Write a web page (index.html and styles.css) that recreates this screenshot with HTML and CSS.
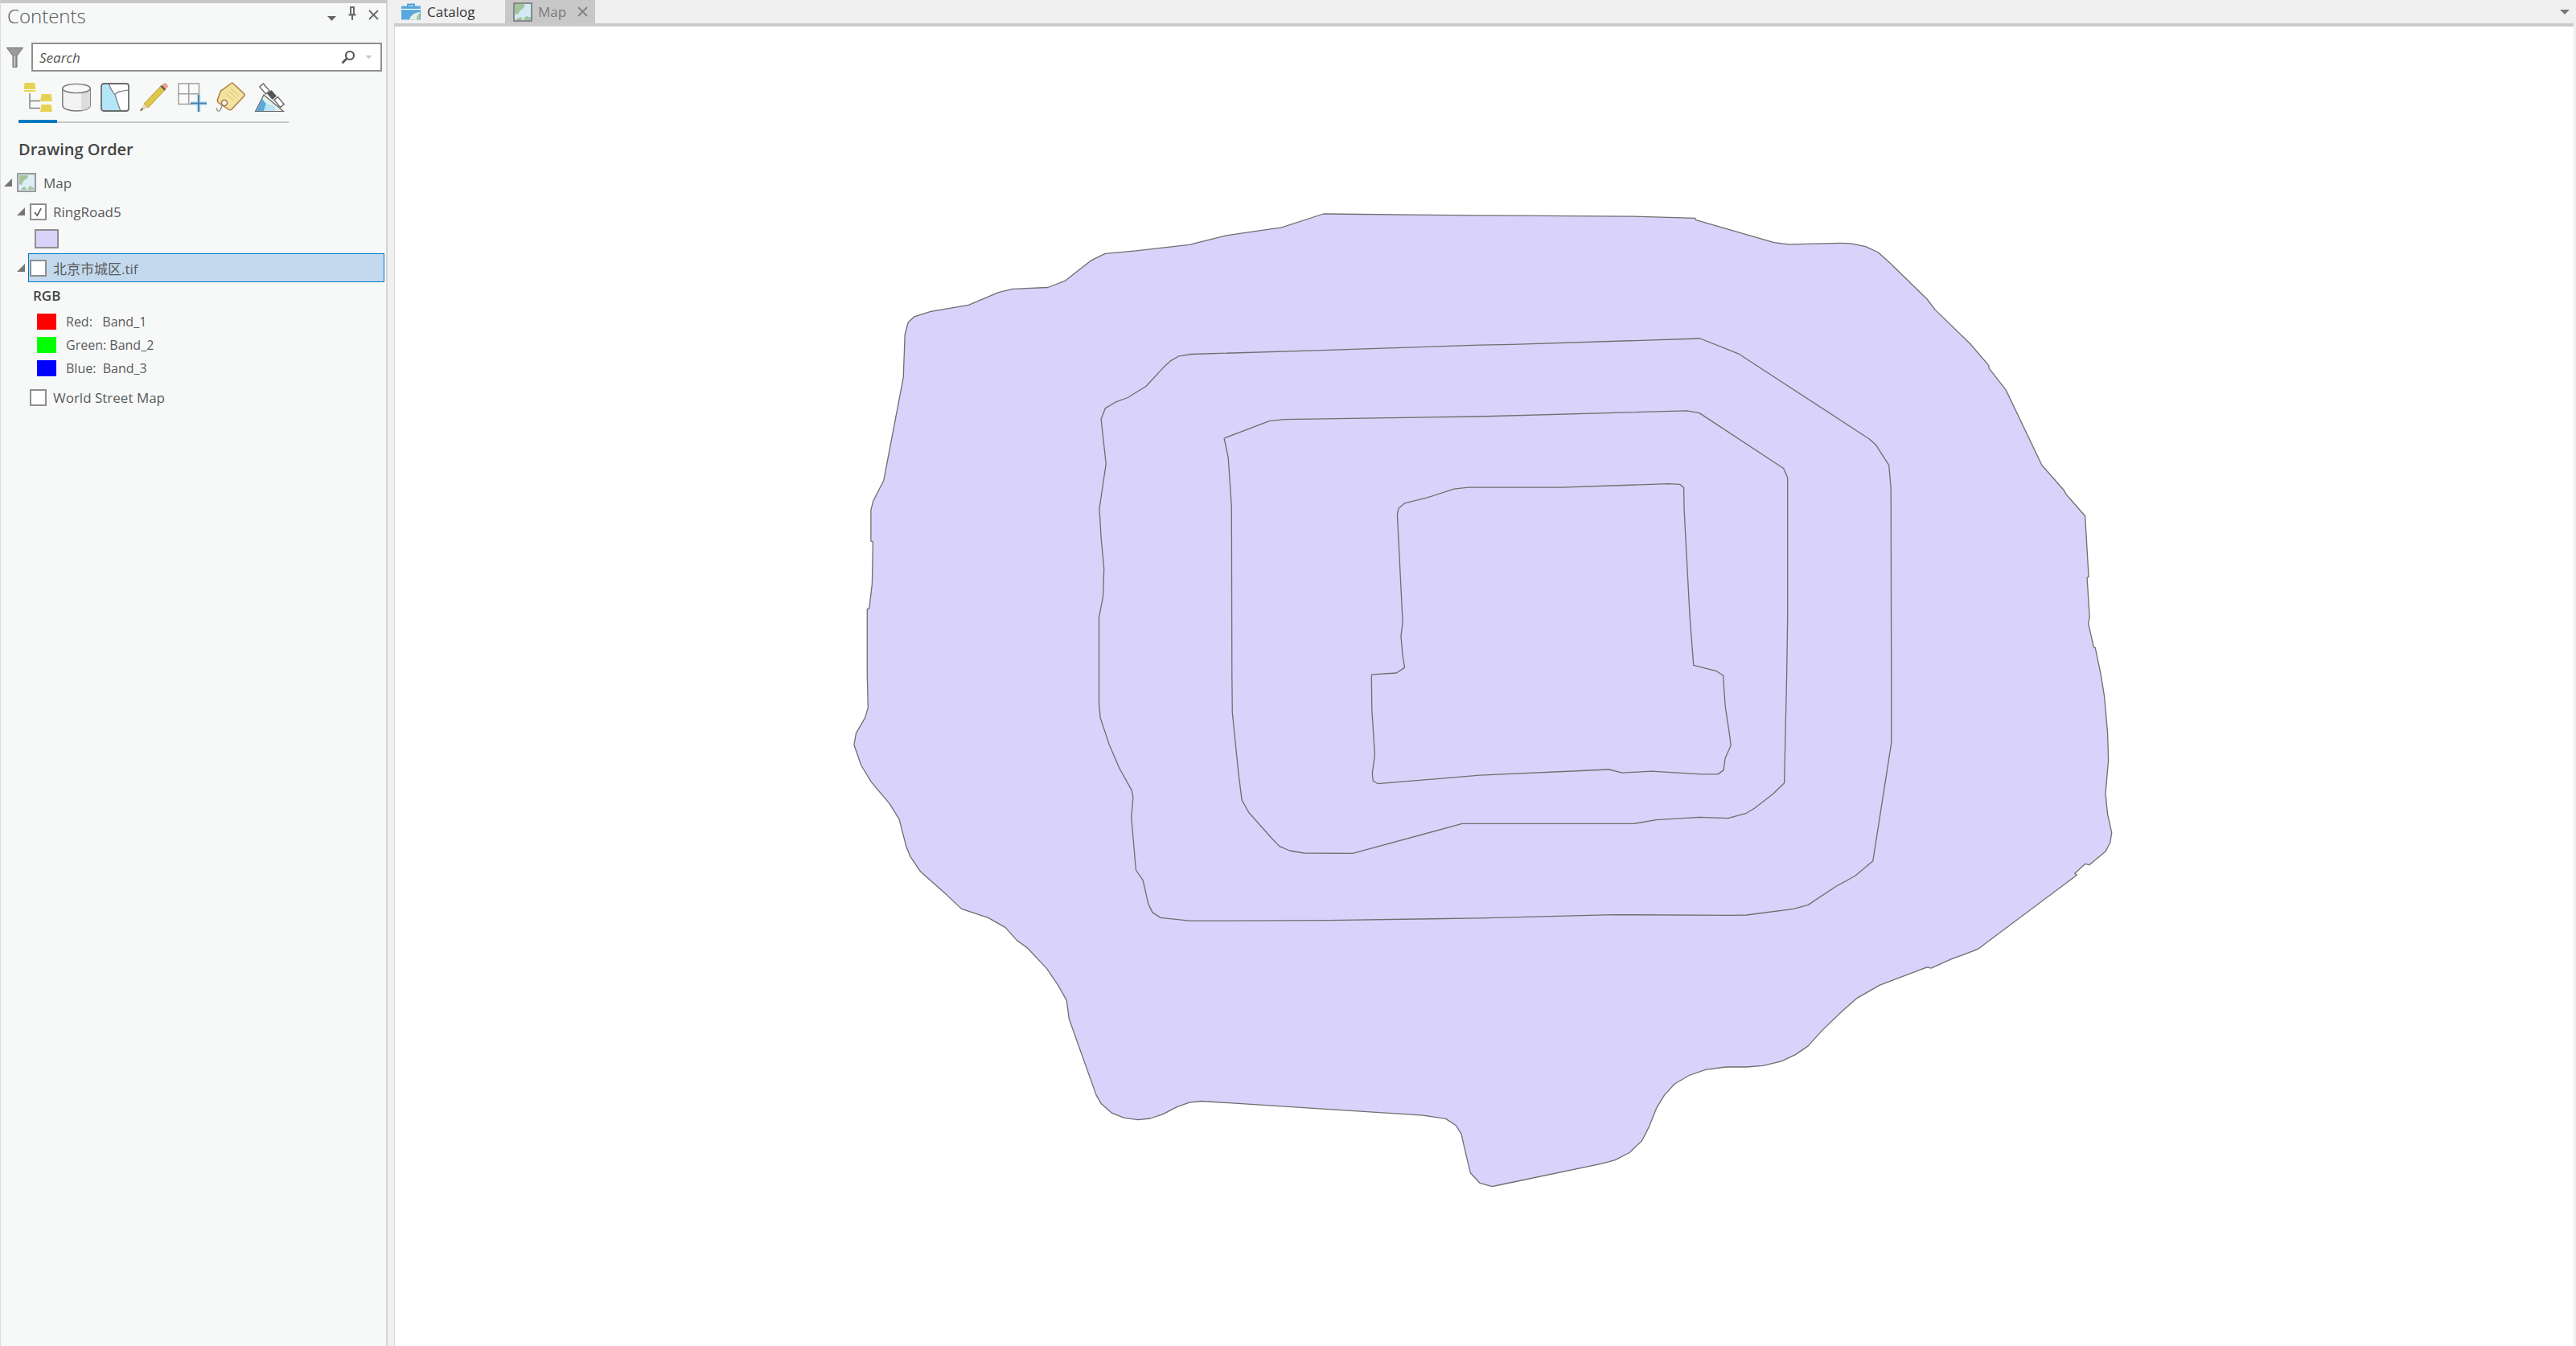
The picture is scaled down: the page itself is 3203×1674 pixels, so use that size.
FILE: index.html
```html
<!DOCTYPE html>
<html lang="en">
<head>
<meta charset="utf-8">
<title>Map</title>
<link rel="stylesheet" href="styles.css">
</head>
<body>
<aside class="panel">
  <header class="panel-head">
    <h1 class="panel-title">Contents</h1>
    <div class="panel-tools">
      <span class="menu-arrow"></span>
      <svg class="tool-pin" viewBox="0 0 12 18"><path d="M3 1H9M4 1V10H8V1M1.500 10.500H10.500M6 11V17" fill="none" stroke="#6a6a6a" stroke-width="2"/></svg>
      <svg class="tool-close" viewBox="0 0 13 13"><path d="M1 1L12 12M12 1L1 12" fill="none" stroke="#6a6a6a" stroke-width="1.800"/></svg>
    </div>
  </header>
  <div class="search-row">
    <svg class="filter" viewBox="0 0 21 25"><path d="M0.500 0.500H20.500L13 10.500V24.500H8V10.500Z" fill="#9a9a9a" stroke="#6f6f6f"/><path d="M10 11V24" stroke="#c4c4c4" stroke-width="2"/></svg>
    <div class="search">
      <span class="search-text">Search</span>
      <svg class="search-glass" viewBox="0 0 18 18"><circle cx="11" cy="7" r="5" fill="#fff" stroke="#555" stroke-width="2.200"/><path d="M7.500 10.500L1.500 16.500" stroke="#555" stroke-width="2.600"/></svg>
      <span class="search-arrow"></span>
    </div>
  </div>
  <nav class="view-tabs">
    <div class="view-tab active">
      <svg viewBox="0 0 36 36"><path d="M1.500 0H14.500L15.500 11H0.500Z" fill="#e6d252"/><path d="M0 8.500H16" stroke="#f7f9f9" stroke-width="1.200"/><path d="M8 13V31.500H21M8 22.500H21" fill="none" stroke="#808080" stroke-width="1.400"/><path d="M22.500 14H34.500L36 23H21Z" fill="#e6d252"/><path d="M22.500 27H34.500L36 36H21Z" fill="#e6d252"/></svg>
    </div>
    <div class="view-tab">
      <svg viewBox="0 0 36 36"><path d="M0.800 7V28C0.800 32 8 35 18 35S35.200 32 35.200 28V7Z" fill="#f3f3f3" stroke="#777" stroke-width="1.400"/><path d="M24 11.500C30 10.500 34.500 9 35 7V28C35 31 31 33.500 24 34.500Z" fill="#dcdcdc"/><ellipse cx="18" cy="7" rx="17.200" ry="5.600" fill="#f8f8f8" stroke="#777" stroke-width="1.400"/></svg>
    </div>
    <div class="view-tab">
      <svg viewBox="0 0 36 36"><rect x="1" y="1" width="34" height="34" rx="3" fill="#fff"/><path d="M1 4C1 2 2 1 4 1H11C11 7 15 10 18 15C20 20 22 28 25 35H4C2 35 1 34 1 32Z" fill="#b3e6f6"/><path d="M11 1C11 7 15 10 18 15C20 20 22 28 25 35M18 15C20 11 26 10 35 9" fill="none" stroke="#777" stroke-width="1.200"/><rect x="1" y="1" width="34" height="34" rx="3" fill="none" stroke="#6b6b6b" stroke-width="1.800"/></svg>
    </div>
    <div class="view-tab">
      <svg viewBox="0 0 36 36"><path d="M6 26L28 3L33 8L11 31Z" fill="#e0c846" stroke="#a08a30" stroke-width="0.800"/><path d="M28 3L31 0.500C32 0 33 0 34 1L35.500 3C36 4 36 5 35 6L33 8Z" fill="#eaa08c"/><path d="M26.500 4.500L31.500 9.500L33 8L28 3Z" fill="#555"/><path d="M6 26L11 31L1 35.500Z" fill="#e8d8b0"/><path d="M3 31L5 33L1 35.500Z" fill="#555"/></svg>
    </div>
    <div class="view-tab">
      <svg viewBox="0 0 36 36"><path d="M1 1H26.500V26.500H1ZM13.700 1V26.500M1 13.700H26.500" fill="#fafafa" stroke="#a0a0a0" stroke-width="1.500"/><path d="M26 15V36M16 25.500H36" stroke="#bfe4f7" stroke-width="5"/><path d="M26 15V36M16 25.500H36" stroke="#4a7fa8" stroke-width="2"/></svg>
    </div>
    <div class="view-tab">
      <svg viewBox="0 0 36 36"><path d="M18 1C19 0 20 0 21 1L34.500 13.500C35.500 14.500 35.500 15.500 34.500 16.500L19 33C18 34 16 34 15 33L3 25C1.500 24 1 23 1.500 21L5 11C5.500 10 6 9.500 7 9Z" fill="#f3e3a0" stroke="#b07c3e" stroke-width="1.500"/><path d="M15 10L25 19M12 13L21 22M18 7L28 16" stroke="#e3cd86" stroke-width="1.200"/><circle cx="10" cy="25" r="3.500" fill="#fff" stroke="#a0703a" stroke-width="1.500"/><path d="M8 27C6 30 6 34 3.500 35S0 33 1 31" fill="none" stroke="#777" stroke-width="1.100"/></svg>
    </div>
    <div class="view-tab">
      <svg viewBox="0 0 36 36"><path d="M0.500 35.500L11 15L35.500 35.500Z" fill="#e3f0e8" stroke="#666" stroke-width="1.200"/><path d="M1.500 35L9 20L14 26L11 35Z" fill="#5ea9dc"/><path d="M11 35L14 26L24 29L26 35Z" fill="#b9e2f5"/><rect x="6" y="4.500" width="12" height="6" fill="#fff" stroke="#666" stroke-width="1.400" transform="rotate(50 12 7.500)"/><rect x="24" y="21" width="12" height="6" fill="#fff" stroke="#666" stroke-width="1.400" transform="rotate(50 30 24)"/><rect x="16" y="11.500" width="10" height="7" fill="#555" transform="rotate(50 21 15)"/></svg>
    </div>
  </nav>
  <h2 class="order-title">Drawing Order</h2>
  <div class="tree">
    <div class="row row-map">
      <span class="twist"></span>
      <svg class="map-icon" viewBox="0 0 24 24"><rect x="1" y="1" width="22" height="22" fill="#dcedf5" stroke="#7d7d7d" stroke-width="1.500"/><path d="M3 3H14C14 6 12 8 9 9C8 11 6 12 6 15C5 15 4 14 3 15ZM14 21C14 19 15 17 17 16C18 18 20 19 21 18V21ZM5 21C6 18 9 17 11 18L12 21Z" fill="#a2c49c"/></svg>
      <span class="label">Map</span>
    </div>
    <div class="row row-layer">
      <span class="twist"></span>
      <span class="check"><svg viewBox="0 0 21 21"><path d="M5 11L9 16L15 5" fill="none" stroke="#5a5a5a" stroke-width="2"/></svg></span>
      <span class="label">RingRoad5</span>
    </div>
    <div class="row-patch"><span class="patch"></span></div>
    <div class="row row-selected">
      <span class="twist"></span>
      <div class="selection">
        <span class="check"></span>
        <span class="label">北京市城区.tif</span>
      </div>
    </div>
    <div class="row-rgb">RGB</div>
    <div class="row-band"><span class="swatch swatch-red"></span><span class="band">Red:   Band_1</span></div>
    <div class="row-band"><span class="swatch swatch-green"></span><span class="band">Green: Band_2</span></div>
    <div class="row-band"><span class="swatch swatch-blue"></span><span class="band">Blue:  Band_3</span></div>
    <div class="row row-world">
      <span class="check"></span>
      <span class="label">World Street Map</span>
    </div>
  </div>
</aside>
<main class="main">
  <div class="tabbar">
    <div class="tab tab-catalog">
      <svg class="tab-icon" viewBox="0 0 24 21"><path d="M8 4V1.500H16V4" fill="none" stroke="#4a9bd8" stroke-width="1.800"/><rect x="0" y="3.500" width="24" height="17" fill="#58a7de"/><path d="M0 7.500H24" stroke="#fff" stroke-width="1.200"/><path d="M10 20.500C11 16 15 12 23 11V20.500Z" fill="#e4f0e4"/><path d="M19 20.500C19 17 20 14 23 13V20.500Z" fill="#a2c49c"/></svg>
      <span class="tab-text">Catalog</span>
    </div>
    <div class="tab tab-map">
      <svg class="tab-icon-map" viewBox="0 0 24 24"><rect x="1" y="1" width="22" height="22" fill="#d3e9f6" stroke="#6f6f6f" stroke-width="1.500"/><path d="M2 2H14C15 6 12 8 10 9C9 11 7 12 6 15C4 15 3 14 2 15ZM13 22C13 20 14 18 17 17C19 18 20 19 22 18V22ZM3 22C5 19 8 18 11 19L11 22Z" fill="#a2c49c"/></svg>
      <span class="tab-text-map">Map</span>
      <svg class="tab-close" viewBox="0 0 13 13"><path d="M1 1L12 12M12 1L1 12" fill="none" stroke="#808080" stroke-width="1.800"/></svg>
    </div>
    <span class="tabbar-arrow"></span>
  </div>
  <div class="canvas">
    <svg class="map-svg" viewBox="491 33 2709 1641">
      <polygon class="area" points="1645.600,266 1840,267.900 2031.300,269.100 2107.900,271.400 2108.900,273.700 2205.800,301.600 2223.700,303.900 2289,302.400 2301.700,302.800 2319.600,306.600 2334.900,313.500 2350.200,327.300 2396.100,372 2406.300,385.400 2449.700,427.500 2472.700,454.300 2473.200,458.100 2494.100,484.900 2539,578.700 2567,610.500 2568.600,614.300 2592.600,641.800 2597.100,717.600 2595.100,718.400 2598.200,768.100 2596.600,775 2603.300,804.900 2605.300,805.600 2612.400,840 2616.500,865.300 2620.600,911.600 2621.600,945.200 2618,987.300 2620.600,1012.600 2625.700,1035.700 2623.700,1048.300 2618,1058.900 2597.700,1075.700 2592.600,1074.400 2579.800,1086.200 2582.300,1088.300 2578.800,1090.900 2459.900,1180.100 2442,1187.200 2426.700,1192.700 2401.200,1204.100 2396.100,1202.800 2337.400,1225.100 2309.400,1241.100 2291.500,1256.700 2266,1281.100 2248.200,1300.900 2232.900,1311.400 2215,1319.800 2192,1325.300 2171.600,1327 2146.100,1327 2120.600,1330.400 2100.200,1337.500 2082.300,1348 2069.600,1361.900 2059.400,1378.700 2050.200,1401.900 2041.500,1418.700 2026.200,1433.500 2008.400,1442.700 1993,1446.900 1865.500,1473.500 1855.300,1475.600 1840,1471.300 1828.300,1458.700 1823.200,1437.700 1817,1410.300 1810.400,1399.800 1797.700,1391.400 1769.600,1387.200 1494.100,1369.500 1478.800,1371.200 1463.500,1376.700 1445.600,1385.900 1430.300,1391 1415,1392.600 1397.100,1390.100 1381.800,1383.800 1369.100,1372.400 1363,1361.900 1329.300,1267.200 1326.200,1244.100 1315.500,1225.100 1301.200,1204.100 1277.200,1178.800 1264.500,1169.600 1250.200,1153.600 1228.800,1141.400 1195.600,1130.400 1177.800,1113.600 1144.600,1084.100 1131.800,1065.200 1126.700,1052.600 1118.100,1018.900 1106.300,999.900 1083.400,972.600 1070.600,951.500 1061.900,926.300 1064.500,911.600 1075.700,892.600 1079.300,880 1078.300,840 1078.300,757.400 1080.800,756.600 1084.400,726 1085.400,673.600 1082.900,673.200 1082.900,634.200 1085.900,622.700 1098.700,597.800 1123.200,469.600 1125.200,416 1129.300,400.700 1136.900,393.800 1157.300,387.300 1204.300,379.300 1241.500,363.600 1259.400,359.400 1302.800,357.500 1324.700,349.100 1356.300,324.200 1374.200,315.400 1412.400,311.900 1478.800,304.300 1524.700,292.800 1593.600,282.900"/>
      <polygon class="ring" points="1481.300,440.500 1636.900,435.900 1840,429.100 1880.800,428.300 2114,421 2161.400,439.800 2324.700,546.200 2332.900,553.800 2348.700,578.700 2351.200,607.400 2351.700,840 2351.700,924.200 2328.800,1070.700 2306.800,1089.200 2283.900,1101.800 2248.200,1125.400 2230.300,1130.400 2171.600,1138 2151.200,1138.400 2005.800,1137.600 1840,1141.800 1652.200,1144.700 1478.800,1145.200 1443,1141.400 1432.900,1134.600 1427.800,1124.100 1421.100,1094.600 1412.400,1082 1406.800,1016.800 1408.900,991.500 1407.300,983.100 1392,955.700 1379.300,926.300 1368.100,892.600 1366.500,873.700 1366.500,840 1366.500,768.100 1371.600,741.300 1372.700,706.900 1369.100,668.600 1367,632.300 1375.200,576.800 1369.100,521.300 1374.200,507.900 1386.900,500.200 1402.200,494.500 1425.200,480.300 1445.600,458.100 1455.800,448.600 1466,442.800"/>
      <polygon class="ring" points="1522.100,545 1578.300,523.600 1596.100,521.700 1840,518 2097.700,510.900 2113,513.600 2217.600,582.500 2222.700,594 2222.700,768.100 2221.600,840 2218.600,973.800 2204.800,987.300 2181.800,1005 2171.600,1011.300 2148.700,1017.600 2113,1016.400 2059.400,1019.700 2031.300,1024.400 1840,1024.400 1818,1024.400 1681.800,1061.400 1621.600,1061 1603.800,1058 1591,1052.600 1580.800,1042 1552.800,1010.500 1544.100,994.900 1540,962.100 1532.300,886.300 1531.800,840 1531.300,630.400 1527.200,569.100"/>
      <polygon class="ring" points="1737.400,639.900 1739,632.300 1746.600,625.800 1774.700,618.900 1807.800,608.200 1825.700,606.200 1840,606.200 1942,606.200 2074.700,601.600 2089,602.400 2093.600,606.600 2094.100,634.200 2101.200,768.100 2105.800,827.400 2133.400,834.300 2142.600,840 2145.100,877.900 2150.200,911.600 2152.200,927.100 2145.100,943.100 2143.100,957.900 2135.900,962.900 2115.500,962.900 2053.300,959.100 2017,961.200 2000.700,957 1840,964.200 1713.500,974.700 1707.300,971.300 1706.300,962.100 1709.400,938.900 1705.800,882.100 1705.300,840 1705.800,838.900 1736.400,837 1746.600,830.100 1744.100,816 1742,791.100 1744.100,773.900"/>
    </svg>
  </div>
</main>
</body>
</html>
```
FILE: styles.css
```css
* { box-sizing: border-box; }
html, body { margin: 0; height: 100%; }
body {
  display: flex;
  width: 3203px;
  height: 1674px;
  overflow: hidden;
  background: #f0f0f0;
  font-family: "Open Sans", "Noto Sans CJK SC", sans-serif;
  color: #4a4a4a;
}

/* Contents pane */
.panel {
  flex: 0 0 482px;
  height: 100%;
  background: #f7f9f9;
  border-top: 4px solid #c8c8c8;
  border-right: 2px solid #d4d6d6;
  border-left: 1px solid #dcdcdc;
}
.panel-head {
  display: flex;
  justify-content: space-between;
  align-items: center;
  height: 32px;
  padding: 0 9px 0 8px;
}
.panel-title {
  margin: 0;
  font-size: 24px;
  font-weight: 300;
  color: #555;
  line-height: 32px;
}
.panel-tools { display: flex; align-items: center; gap: 14px; }
.menu-arrow {
  width: 11px;
  height: 6px;
  margin-top: 6px;
  background: #666;
  clip-path: polygon(0 0, 100% 0, 50% 100%);
}
.tool-pin { width: 12px; height: 18px; margin-top: -6px; }
.tool-close { width: 13px; height: 13px; margin-top: -4px; }

.search-row {
  display: flex;
  align-items: center;
  height: 36px;
  margin-top: 17px;
  padding-left: 7px;
}
.filter { width: 21px; height: 25px; margin-right: 10px; }
.search {
  display: flex;
  align-items: center;
  width: 436px;
  height: 36px;
  padding: 0 10px 0 8px;
  background: #fff;
  border: 2px solid #8f8f8f;
}
.search-text { flex: 1; font-size: 17px; font-style: italic; color: #555; }
.search-glass { width: 18px; height: 18px; margin-right: 12px; }
.search-arrow {
  width: 9px;
  height: 5px;
  background: #c8c8c8;
  clip-path: polygon(0 0, 100% 0, 50% 100%);
}

.view-tabs {
  display: flex;
  width: 336px;
  height: 50px;
  margin: 14px 0 0 22px;
  border-bottom: 2px solid #c8c8c8;
}
.view-tab { flex: 0 0 48px; height: 50px; padding: 0 6px; }
.view-tab svg { display: block; width: 36px; height: 36px; overflow: visible; }
.view-tab.active { border-bottom: 4px solid #007ac2; }

.order-title {
  margin: 18px 0 0 22px;
  font-size: 20px;
  font-weight: 600;
  line-height: 30px;
  color: #444;
}

/* Layer tree */
.tree { margin-top: 8px; }
.row { display: flex; align-items: center; height: 36px; }
.label { font-size: 17px; color: #5a5a5a; white-space: pre; }
.twist {
  flex: none;
  width: 10px;
  height: 10px;
  background: #777;
  clip-path: polygon(100% 0, 100% 100%, 0 100%);
}
.row-map { padding-left: 4px; }
.map-icon { width: 24px; height: 24px; margin: 0 9px 0 6px; }
.row-layer, .row-selected { padding-left: 20px; }
.row-layer .label, .selection .label { margin-left: 8px; }
.check {
  flex: none;
  width: 21px;
  height: 21px;
  background: #fff;
  border: 2px solid #8f8f8f;
}
.check svg { display: block; width: 17px; height: 17px; }
.row-layer .check { margin-left: 6px; }
.row-patch { height: 34px; padding: 4px 0 0 42px; }
.patch {
  display: block;
  width: 30px;
  height: 24px;
  background: #d9d2fa;
  border: 2px solid #8f8f8f;
}
.selection {
  display: flex;
  flex: 1;
  align-items: center;
  height: 36px;
  margin-left: 4px;
  margin-right: 2px;
  padding-left: 1px;
  background: #c3d9ee;
  border: 1px solid #007ac2;
}
.row-rgb {
  height: 34px;
  padding-left: 40px;
  font-size: 17px;
  font-weight: 600;
  line-height: 34px;
  color: #444;
}
.row-band {
  display: flex;
  align-items: center;
  height: 29px;
  padding-left: 45px;
}
.swatch { flex: none; width: 24px; height: 20px; margin-right: 12px; }
.swatch-red { background: #f00; }
.swatch-green { background: #0f0; }
.swatch-blue { background: #00f; }
.band { font-size: 16px; color: #5a5a5a; white-space: pre; }
.row-world { margin-top: 4px; padding-left: 36px; }
.row-world .label { margin-left: 8px; }

/* Document area */
.main {
  display: flex;
  flex: 1;
  flex-direction: column;
  min-width: 0;
  height: 100%;
}
.tabbar {
  display: flex;
  align-items: flex-start;
  flex: 0 0 29px;
  padding-left: 17px;
}
.tab { display: flex; align-items: center; height: 29px; }
.tab-catalog { width: 129px; }
.tab-icon { width: 24px; height: 21px; margin-right: 8px; }
.tab-text { font-size: 17px; color: #333; }
.tab-map { width: 112px; padding-left: 10px; background: #c8c8c8; }
.tab-icon-map { width: 24px; height: 24px; margin-right: 7px; }
.tab-text-map { width: 49px; font-size: 17px; color: #7a7a7a; }
.tab-close { width: 13px; height: 13px; }
.tabbar-arrow {
  width: 12px;
  height: 6px;
  margin: 12px 8px 0 auto;
  background: #777;
  clip-path: polygon(0 0, 100% 0, 50% 100%);
}
.canvas {
  flex: 1;
  min-height: 0;
  margin-left: 8px;
  margin-right: 3px;
  background: #fff;
  border-top: 4px solid #cbcbcb;
  border-left: 1px solid #d8d8d8;
}
.map-svg { display: block; width: 100%; height: 100%; }
.area { fill: #d9d2fa; stroke: #6e6e6e; stroke-width: 1.300; stroke-linejoin: round; }
.ring { fill: none; stroke: #6e6e6e; stroke-width: 1.300; stroke-linejoin: round; }
```
